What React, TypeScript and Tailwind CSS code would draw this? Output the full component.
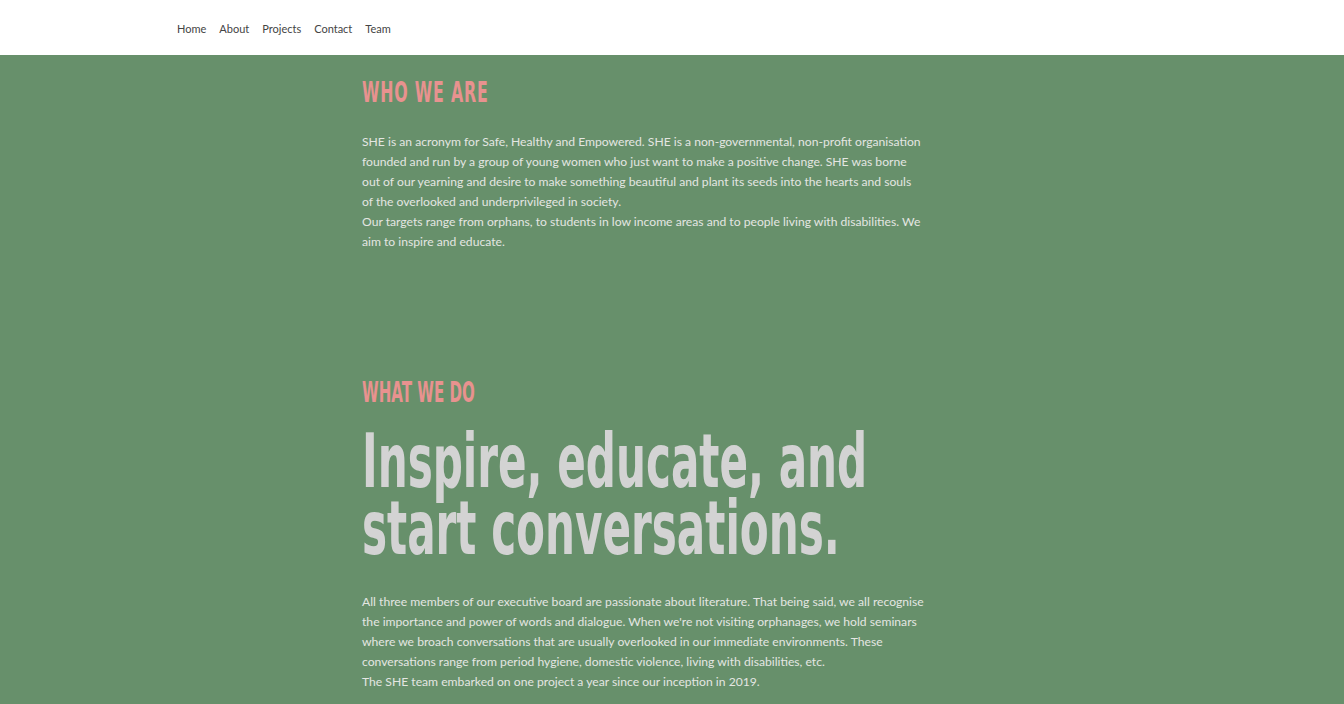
import React from "react";

const NAV = ["Home", "About", "Projects", "Contact", "Team"];

const WHO_LINES = [
  "SHE is an acronym for Safe, Healthy and Empowered. SHE is a non-governmental, non-profit organisation",
  "founded and run by a group of young women who just want to make a positive change. SHE was borne",
  "out of our yearning and desire to make something beautiful and plant its seeds into the hearts and souls",
  "of the overlooked and underprivileged in society.",
  "Our targets range from orphans, to students in low income areas and to people living with disabilities. We",
  "aim to inspire and educate.",
];

const WHAT_LINES = [
  "All three members of our executive board are passionate about literature. That being said, we all recognise",
  "the importance and power of words and dialogue. When we're not visiting orphanages, we hold seminars",
  "where we broach conversations that are usually overlooked in our immediate environments. These",
  "conversations range from period hygiene, domestic violence, living with disabilities, etc.",
  "The SHE team embarked on one project a year since our inception in 2019.",
];

// no condensed face installed, so squeeze DejaVu Sans Bold horizontally
const condensed = "font-['DejaVu_Sans',sans-serif] font-bold origin-left";

function Paragraph({ lines }: { lines: string[] }) {
  return (
    <p className="font-['Lato',sans-serif] text-[12.15px] leading-[20px] text-[#e4e6e2]">
      {lines.map((l, i) => (
        <span key={i} className="block whitespace-nowrap">
          {l}
        </span>
      ))}
    </p>
  );
}

export default function App() {
  return (
    <div className="min-h-screen bg-[#67906b]">
      {/* Header */}
      <header className="h-[55px] bg-white">
        <nav className="flex gap-[13px] pl-[177px] pt-[21px] font-['Lato',sans-serif] text-[11px] text-[#444]">
          {NAV.map((n) => (
            <a key={n} href="#">
              {n}
            </a>
          ))}
        </nav>
      </header>

      <main className="pl-[362px]">
        {/* Who we are */}
        <section className="pt-[21px]">
          <h2
            className={`${condensed} inline-block scale-x-[0.545] text-[29px] leading-[32px] tracking-[1.5px] text-[#e8928f]`}
          >
            WHO WE ARE
          </h2>
          <div className="mt-[24px]">
            <Paragraph lines={WHO_LINES} />
          </div>
        </section>

        {/* What we do */}
        <section className="pt-[124px]">
          <h2
            className={`${condensed} inline-block scale-x-[0.52] text-[29px] leading-[32px] text-[#e8928f]`}
          >
            WHAT WE DO
          </h2>
          <h1
            className={`${condensed} mt-[20px] scale-x-[0.569] whitespace-nowrap text-[74px] leading-[67px] text-[#d3d3d3]`}
          >
            Inspire, educate, and
            <br />
            start conversations.
          </h1>
          <div className="mt-[30px]">
            <Paragraph lines={WHAT_LINES} />
          </div>
        </section>
      </main>
    </div>
  );
}
